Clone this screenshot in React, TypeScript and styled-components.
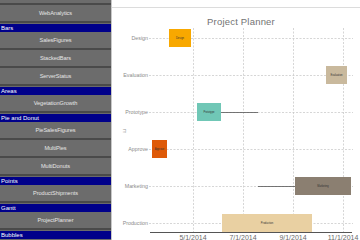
import React from "react";
import styled, { createGlobalStyle } from "styled-components";

const Global = createGlobalStyle`
  html, body { margin: 0; padding: 0; background: #ffffff; }
  body { width: 360px; height: 240px; overflow: hidden; font-family: "Liberation Sans", Arial, sans-serif; }
  #root { width: 360px; height: 240px; }
`;

const Page = styled.div`
  display: flex;
  width: 360px;
  height: 240px;
  overflow: hidden;
`;

const Sidebar = styled.nav`
  width: 111px;
  flex: none;
  height: 240px;
  overflow: hidden;
  background: #6a6a6a;
  border-right: 1px solid #c8c8c8;
  display: flex;
  flex-direction: column;
`;

const NavButton = styled.div<{ $h?: number }>`
  flex: none;
  height: ${(p) => p.$h ?? 16}px;
  box-sizing: content-box;
  border-bottom: 2px solid #4a4a4a;
  background: #6c6c6c;
  color: #e6e6e6;
  font-size: 5.6px;
  display: flex;
  align-items: center;
  justify-content: center;
  letter-spacing: -0.05px;
`;

const SectionHeader = styled.div`
  flex: none;
  height: 8.5px;
  margin-top: 0.5px;
  background: #00008a;
  color: #ffffff;
  font-size: 6px;
  line-height: 8.5px;
  padding-left: 1px;
`;

const ChartPane = styled.main`
  flex: 1;
  display: flex;
  flex-direction: column;
  background: #ffffff;
`;

const TopRule = styled.div`
  height: 7px;
  flex: none;
  border-bottom: 1px solid #dcdcdc;
`;

const Title = styled.div`
  height: 20px;
  box-sizing: border-box;
  padding-top: 6px;
  flex: none;
  display: flex;
  align-items: center;
  justify-content: center;
  padding-left: 10px;
  color: #737373;
  font-size: 9.5px;
  letter-spacing: 0.2px;
`;

const Plot = styled.svg`
  display: block;
  flex: none;
  overflow: hidden;
`;

type Item = { kind: "h" | "b"; label: string };

const items: Item[] = [
  { kind: "b", label: "WebAnalytics" },
  { kind: "h", label: "Bars" },
  { kind: "b", label: "SalesFigures" },
  { kind: "b", label: "StackedBars" },
  { kind: "b", label: "ServerStatus" },
  { kind: "h", label: "Areas" },
  { kind: "b", label: "VegetationGrowth" },
  { kind: "h", label: "Pie and Donut" },
  { kind: "b", label: "PieSalesFigures" },
  { kind: "b", label: "MultiPies" },
  { kind: "b", label: "MultiDonuts" },
  { kind: "h", label: "Points" },
  { kind: "b", label: "ProductShipments" },
  { kind: "h", label: "Gantt" },
  { kind: "b", label: "ProjectPlanner" },
  { kind: "h", label: "Bubbles" },
  { kind: "b", label: "" },
];

const rows = [
  { label: "Design", y: 10 },
  { label: "Evaluation", y: 47 },
  { label: "Prototype", y: 84 },
  { label: "Approve", y: 121 },
  { label: "Marketing", y: 158 },
  { label: "Production", y: 195 },
];

const xTicks = [
  { label: "5/1/2014", x: 81 },
  { label: "7/1/2014", x: 131 },
  { label: "9/1/2014", x: 181 },
  { label: "11/1/2014", x: 231 },
];

const bars = [
  { label: "Design", x1: 57, x2: 79, y: 10, color: "#f8a800" },
  { label: "Evaluation", x1: 214, x2: 235, y: 47, color: "#c9b99d" },
  { label: "Prototype", x1: 85, x2: 109, y: 84, color: "#70c7b6" },
  { label: "Approve", x1: 40, x2: 55, y: 121, color: "#de5a08" },
  { label: "Marketing", x1: 183, x2: 239, y: 158, color: "#8b7f71" },
  { label: "Production", x1: 110, x2: 200, y: 195, color: "#e9d0a2" },
];

const links = [
  { x1: 109, x2: 146, y: 84 },
  { x1: 146, x2: 183, y: 158 },
];

const FONT = "Liberation Sans, Arial, sans-serif";

export default function App() {
  return (
    <Page>
      <Global />
      <Sidebar>
        <NavButton $h={3} />
        {items.map((it, i) =>
          it.kind === "h" ? (
            <SectionHeader key={i}>{it.label}</SectionHeader>
          ) : (
            <NavButton key={i}>{it.label}</NavButton>
          )
        )}
      </Sidebar>
      <ChartPane>
        <TopRule />
        <Title>Project Planner</Title>
        <Plot width={248} height={212} viewBox="0 0 248 212">
          <text
            x={11}
            y={103}
            fontSize={5}
            fill="#9a9a9a"
            fontFamily={FONT}
            transform="rotate(90 11 103)"
            textAnchor="middle"
          >
            m
          </text>
          {rows.map((r) => (
            <g key={r.label}>
              <text x={36} y={r.y + 1.8} fontSize={5.3} fill="#8a8a8a" textAnchor="end" fontFamily={FONT}>
                {r.label}
              </text>
              <line
                x1={37}
                x2={241}
                y1={r.y + 0.5}
                y2={r.y + 0.5}
                stroke="#c4c4c4"
                strokeWidth={0.7}
                strokeDasharray="2 1.5"
              />
            </g>
          ))}
          {xTicks.map((t) => (
            <g key={t.label}>
              <line
                x1={t.x + 0.5}
                x2={t.x + 0.5}
                y1={0}
                y2={204}
                stroke="#c4c4c4"
                strokeWidth={0.7}
                strokeDasharray="2 1.5"
              />
              <text x={t.x} y={211.8} fontSize={7} fill="#6a6a6a" textAnchor="middle" fontFamily={FONT}>
                {t.label}
              </text>
            </g>
          ))}
          {links.map((l, i) => (
            <line key={i} x1={l.x1} x2={l.x2} y1={l.y + 0.5} y2={l.y + 0.5} stroke="#555555" strokeWidth={0.8} />
          ))}
          {bars.map((b) => (
            <g key={b.label}>
              <rect x={b.x1} y={b.y - 9} width={b.x2 - b.x1} height={18} fill={b.color} />
              <text
                x={(b.x1 + b.x2) / 2}
                y={b.y + 1.2}
                fontSize={2.6}
                fill="#333333"
                textAnchor="middle"
                fontFamily={FONT}
              >
                {b.label}
              </text>
            </g>
          ))}
          <line x1={38} x2={240} y1={204.5} y2={204.5} stroke="#555555" strokeWidth={1} />
        </Plot>
      </ChartPane>
    </Page>
  );
}
